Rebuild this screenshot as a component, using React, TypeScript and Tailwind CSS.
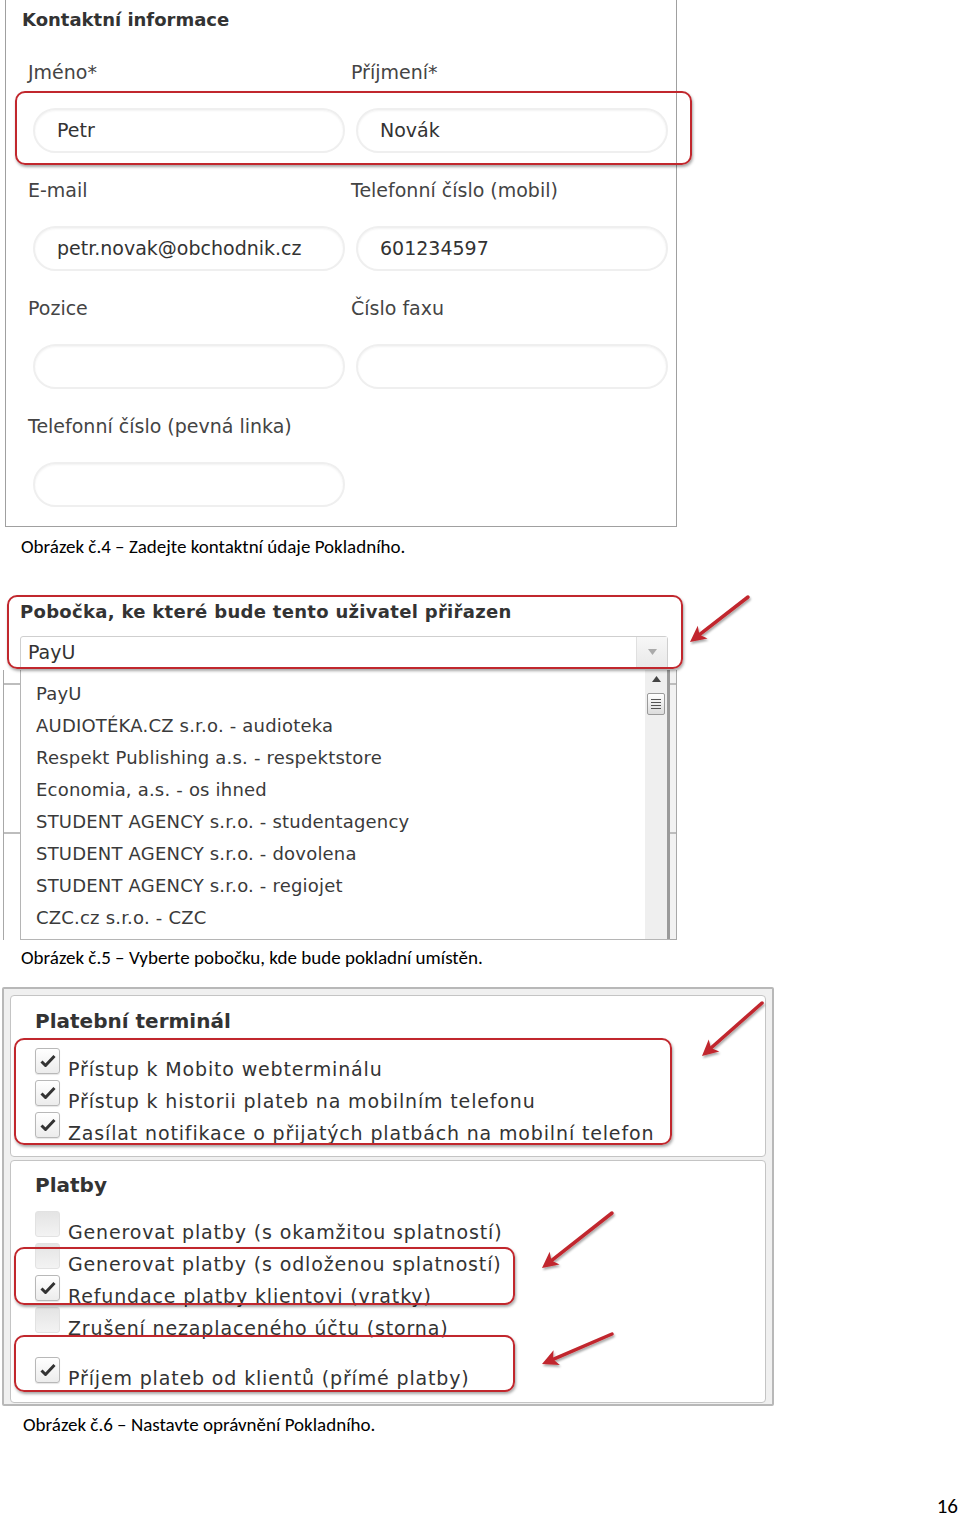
import React from 'react';

const ui = { fontFamily: '"DejaVu Sans", Verdana, sans-serif' };
const doc = { fontFamily: 'Carlito, Lato, "Liberation Sans", sans-serif' };

function TextInput({ value }: { value?: string }) {
  return (
    <div className="ml-[5px] flex h-[45px] w-[312px] items-center rounded-full border-2 border-[#efefef] bg-white pl-[22px] text-[19px] text-[#333] shadow-[inset_0_1px_2px_rgba(0,0,0,0.05)]">
      {value}
    </div>
  );
}

function Field({ label, value }: { label: string; value?: string }) {
  return (
    <div className="flex flex-col">
      <div className="h-[24px] text-[19px] leading-[24px] text-[#444]">{label}</div>
      <div className="mt-[24px]">
        <TextInput value={value} />
      </div>
    </div>
  );
}

function Highlight({ className }: { className: string }) {
  return (
    <div
      className={
        'pointer-events-none absolute rounded-[10px] border-2 border-[#c1272d] shadow-[1px_2px_3px_rgba(0,0,0,0.35)] ' +
        className
      }
    />
  );
}

function Arrow({ x1, y1, x2, y2 }: { x1: number; y1: number; x2: number; y2: number }) {
  // arrow drawn from (x1,y1) tail to (x2,y2) head
  const dx = x2 - x1;
  const dy = y2 - y1;
  const len = Math.sqrt(dx * dx + dy * dy);
  const ux = dx / len;
  const uy = dy / len;
  const bx = x2 - ux * 16;
  const by = y2 - uy * 16;
  const px = -uy * 8;
  const py = ux * 8;
  return (
    <svg className="pointer-events-none absolute left-0 top-0" width="960" height="1518">
      <defs>
        <filter id={`sh${x1}${y1}`} x="-20%" y="-20%" width="140%" height="140%">
          <feDropShadow dx="1" dy="2" stdDeviation="1.2" floodColor="#000" floodOpacity="0.35" />
        </filter>
      </defs>
      <g filter={`url(#sh${x1}${y1})`}>
        <line x1={x1} y1={y1} x2={bx + ux * 4} y2={by + uy * 4} stroke="#c1272d" strokeWidth="3.5" strokeLinecap="round" />
        <polygon
          points={`${x2},${y2} ${bx + px},${by + py} ${bx + ux * 4},${by + uy * 4} ${bx - px},${by - py}`}
          fill="#c1272d"
        />
      </g>
    </svg>
  );
}

function Check({ checked }: { checked?: boolean }) {
  if (checked) {
    return (
      <div className="flex h-[26px] w-[25px] shrink-0 items-center justify-center rounded-[3px] border border-[#b8b8b8] bg-gradient-to-b from-white to-[#ececec] shadow-[0_1px_1px_rgba(0,0,0,0.1)]">
        <svg width="16" height="14" viewBox="0 0 16 14">
          <path d="M1.5 7.5 L5.5 11.5 L14.5 2" fill="none" stroke="#333" strokeWidth="3" strokeLinejoin="round" />
        </svg>
      </div>
    );
  }
  return (
    <div className="h-[26px] w-[25px] shrink-0 rounded-[3px] border border-[#e2e2e2] bg-gradient-to-b from-[#e4e4e4] to-[#f3f3f3]" />
  );
}

function CheckRow({ label, checked }: { label: string; checked?: boolean }) {
  return (
    <div className="flex h-[32px] items-start">
      <Check checked={checked} />
      <span className="ml-[8px] mt-[9px] whitespace-nowrap text-[19px] leading-[24px] tracking-[0.85px] text-[#333]">
        {label}
      </span>
    </div>
  );
}

const branches = [
  'PayU',
  'AUDIOTÉKA.CZ s.r.o. - audioteka',
  'Respekt Publishing a.s. - respektstore',
  'Economia, a.s. - os ihned',
  'STUDENT AGENCY s.r.o. - studentagency',
  'STUDENT AGENCY s.r.o. - dovolena',
  'STUDENT AGENCY s.r.o. - regiojet',
  'CZC.cz s.r.o. - CZC',
];

export default function App() {
  return (
    <div className="relative h-[1518px] w-[960px] overflow-hidden bg-white">
      {/* Obrázek 4 */}
      <div className="relative ml-[5px] h-[527px] w-[672px] border border-t-0 border-[#a0a0a0] pl-[16px]" style={ui}>
        <div className="pt-[8px] text-[18px] font-bold leading-[24px] text-[#333]">Kontaktní informace</div>
        <div className="mt-[28px] grid grid-cols-[323px_323px] gap-y-[25px] pl-[6px]">
          <Field label="Jméno*" value="Petr" />
          <Field label="Příjmení*" value="Novák" />
          <Field label="E-mail" value="petr.novak@obchodnik.cz" />
          <Field label="Telefonní číslo (mobil)" value="601234597" />
          <Field label="Pozice" />
          <Field label="Číslo faxu" />
          <Field label="Telefonní číslo (pevná linka)" />
        </div>
      </div>
      <Highlight className="left-[15px] top-[91px] h-[74px] w-[677px]" />
      <div className="ml-[21px] mt-[8px] text-[19px] leading-[24px] text-black" style={doc}>
        Obrázek č.4 – Zadejte kontaktní údaje Pokladního.
      </div>

      {/* Obrázek 5 */}
      <div className="relative ml-[3px] mt-[36px] w-[676px]" style={ui}>
        <div className="h-[75px] pl-[17px] pt-[6px]">
          <div className="text-[18px] font-bold leading-[22px] tracking-[0.3px] text-[#333]">
            Pobočka, ke které bude tento uživatel přiřazen
          </div>
          <div className="mt-[13px] flex h-[32px] w-[648px] rounded-t-[3px] border border-[#cfcfcf] bg-white">
            <div className="flex flex-1 items-center pl-[7px] text-[19px] text-[#333]">PayU</div>
            <div className="flex w-[31px] items-center justify-center border-l border-[#e0e0e0] bg-gradient-to-b from-[#f7f7f7] to-[#e9e9e9]">
              <svg width="9" height="6" viewBox="0 0 9 6">
                <path d="M0 0 H9 L4.5 6Z" fill="#aaa" />
              </svg>
            </div>
          </div>
        </div>
        <div className="flex h-[270px]">
          <div className="flex w-[17px] flex-col border-l border-[#a8a8a8]">
            <div className="mt-[13px] h-[2px] bg-[#bdbdbd]" />
            <div className="mt-[147px] h-[2px] bg-[#bdbdbd]" />
          </div>
          <div className="flex w-[650px] border-b border-l border-[#b5b5b5] bg-white">
            <div className="flex-1 pl-[15px] pt-[8px]">
              {branches.map((b) => (
                <div key={b} className="h-[32px] whitespace-nowrap text-[18px] leading-[32px] tracking-[0.2px] text-[#3a3a3a]">
                  {b}
                </div>
              ))}
            </div>
            <div className="flex w-[22px] flex-col items-center bg-[#efefef] pt-[6px]">
              <svg width="9" height="6" viewBox="0 0 9 6">
                <path d="M4.5 0 L9 6 H0Z" fill="#444" />
              </svg>
              <div className="mt-[11px] flex h-[22px] w-[18px] flex-col items-center justify-center gap-[2px] rounded-[2px] border border-[#9a9a9a] bg-gradient-to-b from-white to-[#dcdcdc]">
                <div className="h-px w-[10px] bg-[#555]" />
                <div className="h-px w-[10px] bg-[#555]" />
                <div className="h-px w-[10px] bg-[#555]" />
                <div className="h-px w-[10px] bg-[#555]" />
              </div>
            </div>
            <div className="w-[3px] bg-[#9a9a9a]" />
          </div>
          <div className="flex w-[7px] flex-col border-r border-b border-[#a8a8a8] bg-[#f2f2f2]">
            <div className="mt-[13px] h-[2px] bg-[#bdbdbd]" />
            <div className="mt-[147px] h-[2px] bg-[#bdbdbd]" />
          </div>
        </div>
        <Highlight className="left-[4px] top-0 h-[74px] w-[676px]" />
      </div>
      <div className="ml-[21px] mt-[6px] text-[19px] leading-[24px] text-black" style={doc}>
        Obrázek č.5 – Vyberte pobočku, kde bude pokladní umístěn.
      </div>

      {/* Obrázek 6 */}
      <div className="relative ml-[2px] mt-[17px] w-[772px] rounded-[2px] border-2 border-[#b8b8b8] bg-[#f0f0f0] px-[6px] pb-[1px] pt-[6px]" style={ui}>
        <div className="h-[162px] rounded-[4px] border border-[#c4c4c4] bg-white pl-[24px] pt-[13px]">
          <div className="text-[20px] font-bold leading-[24px] text-[#333]">Platební terminál</div>
          <div className="mt-[15px]">
            <CheckRow checked label="Přístup k Mobito webterminálu" />
            <CheckRow checked label="Přístup k historii plateb na mobilním telefonu" />
            <CheckRow checked label="Zasílat notifikace o přijatých platbách na mobilní telefon" />
          </div>
        </div>
        <div className="mt-[3px] h-[243px] rounded-[4px] border border-[#c4c4c4] bg-white pl-[24px] pt-[12px]">
          <div className="text-[20px] font-bold leading-[24px] text-[#333]">Platby</div>
          <div className="mt-[14px]">
            <CheckRow label="Generovat platby (s okamžitou splatností)" />
            <CheckRow label="Generovat platby (s odloženou splatností)" />
            <CheckRow checked label="Refundace platby klientovi (vratky)" />
            <CheckRow label="Zrušení nezaplaceného účtu (storna)" />
            <div className="mt-[18px]">
              <CheckRow checked label="Příjem plateb od klientů (přímé platby)" />
            </div>
          </div>
        </div>
      </div>
      <Highlight className="left-[14px] top-[1038px] h-[107px] w-[658px]" />
      <Highlight className="left-[14px] top-[1247px] h-[58px] w-[501px]" />
      <Highlight className="left-[14px] top-[1335px] h-[57px] w-[501px]" />
      <div className="ml-[23px] mt-[7px] text-[19px] leading-[24px] text-black" style={doc}>
        Obrázek č.6 – Nastavte oprávnění Pokladního.
      </div>

      <div className="mt-[59px] pr-[2px] text-right text-[21px] leading-[20px] text-black" style={doc}>
        16
      </div>

      <Arrow x1={748} y1={597} x2={690} y2={642} />
      <Arrow x1={762} y1={1003} x2={702} y2={1056} />
      <Arrow x1={612} y1={1213} x2={542} y2={1268} />
      <Arrow x1={612} y1={1334} x2={542} y2={1364} />
    </div>
  );
}
